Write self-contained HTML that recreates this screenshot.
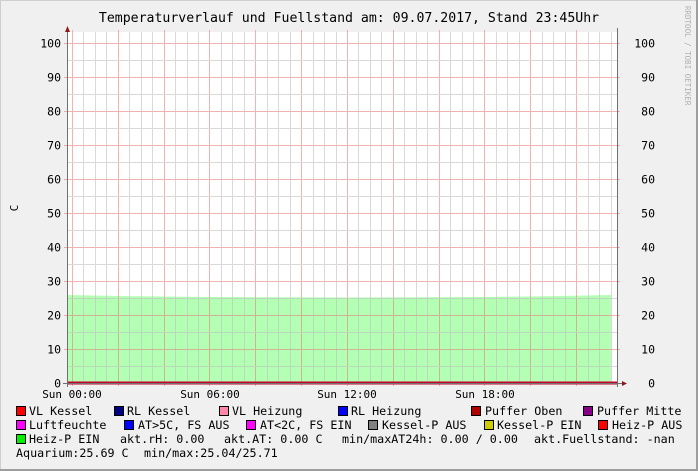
<!DOCTYPE html>
<html><head><meta charset="utf-8"><style>
html,body{margin:0;padding:0;background:#f0f0f0;}
svg{display:block}
text{font-family:"DejaVu Sans Mono","Liberation Mono",monospace;fill:#000;white-space:pre}
</style></head><body>
<svg width="698" height="471" xmlns="http://www.w3.org/2000/svg">
<rect x="0" y="0" width="698" height="471" fill="#f0f0f0"/>
<rect x="0.5" y="0.5" width="697" height="470" fill="none" stroke="#cfcfcf" stroke-width="1"/>
<line x1="0" y1="470" x2="698" y2="470" stroke="#9e9e9e" stroke-width="2"/>
<line x1="697" y1="0" x2="697" y2="471" stroke="#9e9e9e" stroke-width="2"/>
<text x="349" y="22" font-size="13.2" text-anchor="middle">Temperaturverlauf und Fuellstand am: 09.07.2017, Stand 23:45Uhr</text>
<text transform="translate(685,6) rotate(90)" font-size="7.5" style="fill:#b0b0b0">RRDTOOL / TOBI OETIKER</text>
<rect x="67" y="32" width="550" height="351" fill="#fff"/>
<polygon points="67,295 120,296 210,297 347,297.5 485,297 560,296 611,295 611,383 67,383" fill="#b3ffb3"/>
<g id="grid" stroke-width="1" opacity="0.6"></g>
<line x1="67" y1="383" x2="617" y2="383" stroke="#c8002a" stroke-width="3"/>
<line x1="67.5" y1="28" x2="67.5" y2="387" stroke="#707070"/>
<line x1="617.5" y1="28" x2="617.5" y2="387" stroke="#707070"/>
<line x1="63" y1="383.5" x2="622" y2="383.5" stroke="#707070"/>
<polygon points="65,32 70,32 67.5,26" fill="#8b1a1a"/>
<polygon points="622,381 622,386 627,383.5" fill="#8b1a1a"/>
<g id="ylab" font-size="11.5"></g>
<text transform="translate(18,208) rotate(-90)" font-size="11" text-anchor="middle">C</text>
<g font-size="11" text-anchor="middle">
<text x="72" y="398">Sun 00:00</text><text x="210" y="398">Sun 06:00</text><text x="347" y="398">Sun 12:00</text><text x="485" y="398">Sun 18:00</text>
</g>
<g stroke="#000" stroke-width="1">
<rect x="16.5" y="406.5" width="9" height="9" fill="#ff0000"/>
<rect x="114.5" y="406.5" width="9" height="9" fill="#000080"/>
<rect x="219.5" y="406.5" width="9" height="9" fill="#ff88aa"/>
<rect x="338.5" y="406.5" width="9" height="9" fill="#0000ff"/>
<rect x="471.5" y="406.5" width="9" height="9" fill="#b00000"/>
<rect x="583.5" y="406.5" width="9" height="9" fill="#880088"/>
<rect x="16.5" y="420.5" width="9" height="9" fill="#ff00ff"/>
<rect x="124.5" y="420.5" width="9" height="9" fill="#0000ff"/>
<rect x="246.5" y="420.5" width="9" height="9" fill="#ff00ff"/>
<rect x="368.5" y="420.5" width="9" height="9" fill="#808080"/>
<rect x="484.5" y="420.5" width="9" height="9" fill="#cccc00"/>
<rect x="598.5" y="420.5" width="9" height="9" fill="#ff0000"/>
<rect x="16.5" y="434.5" width="9" height="9" fill="#00ee00"/>
</g>
<g font-size="11.7">
<text x="29" y="415">VL Kessel</text><text x="127" y="415">RL Kessel</text><text x="232" y="415">VL Heizung</text><text x="351" y="415">RL Heizung</text><text x="485" y="415">Puffer Oben</text><text x="597" y="415">Puffer Mitte</text>
<text x="29" y="429">Luftfeuchte</text><text x="138" y="429">AT&gt;5C, FS AUS</text><text x="260" y="429">AT&lt;2C, FS EIN</text><text x="382" y="429">Kessel-P AUS</text><text x="497" y="429">Kessel-P EIN</text><text x="612" y="429">Heiz-P AUS</text>
<text x="29" y="443">Heiz-P EIN</text><text x="120" y="443">akt.rH: 0.00</text><text x="224" y="443">akt.AT: 0.00 C</text><text x="342" y="443">min/maxAT24h: 0.00 / 0.00</text><text x="534" y="443">akt.Fuellstand: -nan</text>
<text x="16" y="457">Aquarium:25.69 C</text><text x="144" y="457">min/max:25.04/25.71</text>
</g>
</svg>
<script>
(function(){
var ns="http://www.w3.org/2000/svg",g=document.getElementById("grid"),yl=document.getElementById("ylab");
function L(x1,y1,x2,y2,c){var l=document.createElementNS(ns,"line");l.setAttribute("x1",x1);l.setAttribute("y1",y1);l.setAttribute("x2",x2);l.setAttribute("y2",y2);l.setAttribute("stroke",c);g.appendChild(l);}
for(var k=-1;k<48;k++){var x=Math.round(72+k*11.458)+0.5;if(x<68||x>617)continue;
 if(k%4==0)L(x,30,x,386,"#e88080");else L(x,32,x,383,"#c0c0c0");}
for(var v=0;v<=100;v+=5){var y=Math.round(383-v*3.4)+0.5;
 if(v%10==0){L(64,y,620,y,"#e88080");
  var t=document.createElementNS(ns,"text");t.setAttribute("x",61);t.setAttribute("y",y+4);t.setAttribute("text-anchor","end");t.textContent=v;yl.appendChild(t);
  var t2=document.createElementNS(ns,"text");t2.setAttribute("x",655);t2.setAttribute("y",y+4);t2.setAttribute("text-anchor","end");t2.textContent=v;yl.appendChild(t2);}
 else L(67,y,617,y,"#c0c0c0");}
})();
</script>
</body></html>
